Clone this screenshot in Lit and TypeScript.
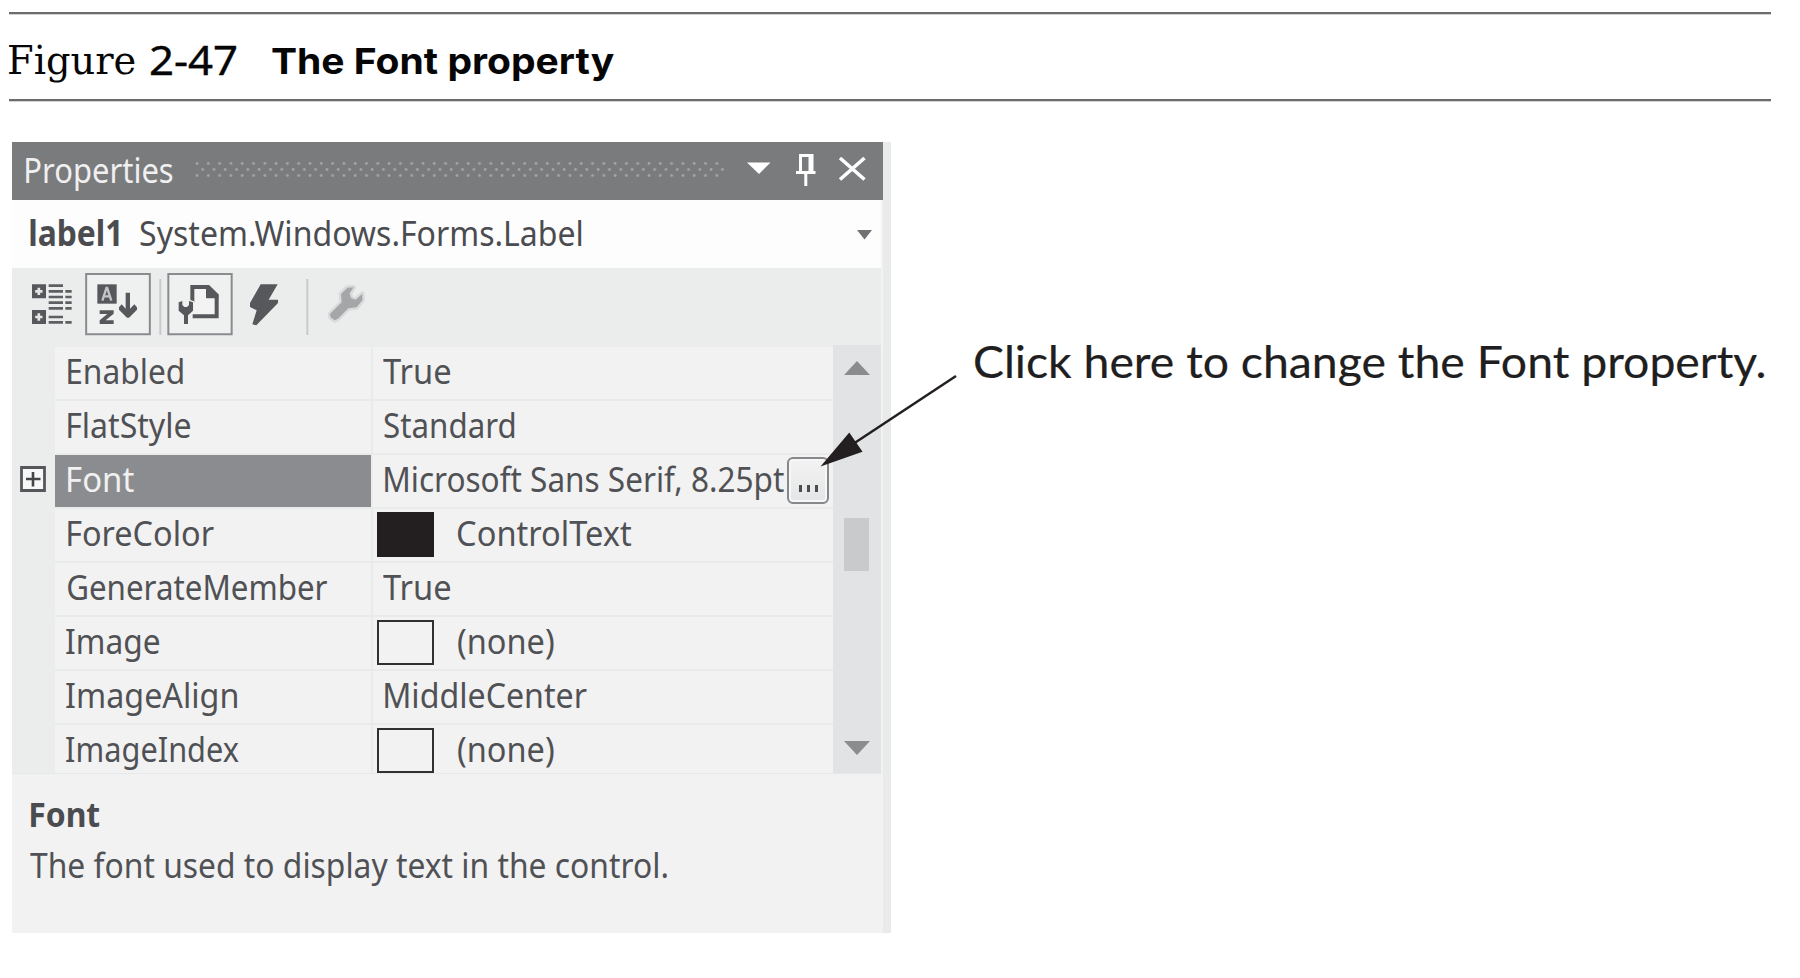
import { LitElement, html, css, svg, nothing } from "lit";
import { customElement, property } from "lit/decorators.js";
import { styleMap } from "lit/directives/style-map.js";

const UI = '"Noto Sans", "Open Sans", sans-serif';
const canvas = document.createElement("canvas");

/** A single line of text whose visible width is stretched to a given size. */
@customElement("fit-text")
class FitText extends LitElement {
  @property() text = "";
  @property({ type: Number }) w = 100;
  @property() font = "400 34px " + UI;

  static styles = css`
    :host { display: block; flex: none; white-space: pre; }
    .box { display: block; }
    .ink { display: inline-block; transform-origin: 0 50%; }
  `;

  render() {
    const ctx = canvas.getContext("2d")!;
    ctx.font = this.font;
    const m = ctx.measureText(this.text);
    const left = m.actualBoundingBoxLeft;
    const k = this.w / (left + m.actualBoundingBoxRight);
    return html`<span class="box" style=${styleMap({ width: this.w + "px" })}
      ><span class="ink" style=${styleMap({ transform: `translateX(${left * k}px) scaleX(${k})` })}>${this.text}</span></span>`;
  }
}

type Row = { name: string; nx: number; nw: number; value: string; vw: number; vx: number; swatch?: "dark" | "empty"; selected?: boolean };

const rows: Row[] = [
  { name: "Enabled", nx: 13, nw: 115.5, value: "True", vx: 10, vw: 67.5 },
  { name: "FlatStyle", nx: 13, nw: 122.5, value: "Standard", vx: 10.5, vw: 131 },
  { name: "Font", nx: 13, nw: 66, value: "Microsoft Sans Serif, 8.25pt", vx: 11.5, vw: 399, selected: true },
  { name: "ForeColor", nx: 13, nw: 146, value: "ControlText", vx: 24, vw: 173.5, swatch: "dark" },
  { name: "GenerateMember", nx: 12.5, nw: 259.5, value: "True", vx: 10, vw: 67.5 },
  { name: "Image", nx: 10.5, nw: 93.5, value: "(none)", vx: 23.5, vw: 95.5, swatch: "empty" },
  { name: "ImageAlign", nx: 10.5, nw: 171.5, value: "MiddleCenter", vx: 11.5, vw: 202 },
  { name: "ImageIndex", nx: 10.5, nw: 173, value: "(none)", vx: 23.5, vw: 95.5, swatch: "empty" },
];

@customElement("app-root")
class AppRoot extends LitElement {
  static styles = css`
    :host { display: block; position: relative; width: 1800px; height: 978px; overflow: hidden; background: #fff;
      font-family: "Noto Sans", "Open Sans", sans-serif; font-size: 34px; color: #505155; }
    * { box-sizing: border-box; }
    svg { display: block; flex: none; }
    .caption { margin: 12px 0 0 9px; width: 1762px; height: 89px; display: flex; align-items: flex-start;
      border-top: 2px solid #6c6c6c; border-bottom: 2px solid #6c6c6c; color: #060606; box-shadow: 0 1px 0 #d2d2d2, inset 0 1px 0 #d2d2d2; }
    .fig { font: 400 39.5px/92px "DejaVu Serif", "Noto Serif", serif; }
    .num { font: 400 40px/92px "Noto Sans", sans-serif; margin-left: 15px; -webkit-text-stroke: 0.4px #060606; }
    .title { font: 700 36px/95px Inter, sans-serif; margin-left: 36px; }
    .body { display: flex; align-items: flex-start; padding: 41px 0 0 12px; }
    .panel { width: 879px; height: 791px; background: #f2f2f2; border-right: 8px solid #e9ebeb; display: flex; flex-direction: column; }
    .head { height: 58px; background: #7a7b7d; display: flex; align-items: flex-start; color: #f0f0f1; font-size: 35px; line-height: 48px; padding: 4px 0 0 14px; flex: none; }
    .dots { margin: 15px 0 0 22px; }
    .hbtns { margin: 4px 0 0 15px; }
    .combo { height: 68px; margin-right: 2px; padding: 4px 9px 0 18px; background: #fdfdfd; display: flex; line-height: 58px; font-size: 35px; color: #4b4c50; flex: none; }
    .obj { font-weight: 700; margin-right: 21px; }
    .chev { margin: 26px 0 0 auto; }
    .tools { height: 77px; background: #ebeded; display: flex; padding-left: 20px; flex: none; margin-right: 2px; }
    .grid { display: flex; flex: none; height: 429px; background: #ebeded; margin-right: 2px; border-bottom: 1px solid #e6e9e9; }
    .gutter { width: 43px; padding: 121px 0 0 8px; }
    .cells { width: 778px; background: #f2f2f2; margin-top: 2px; overflow: hidden; }
    .row { display: flex; height: 54px; line-height: 49px; border-bottom: 2px solid #e9ebeb; }
    .name { width: 318px; border-right: 2px solid #e9ebeb; }
    .row.sel .name { background: #8b8c8f; color: #f1f1f2; border-right-color: #ebeded; }
    .value { flex: 1; display: flex; align-items: flex-start; }
    .lead { height: 1px; flex: none; }
    .swatch { width: 57px; height: 45px; margin: 3px 0 0 4px; border: 2.5px solid #303031; flex: none; }
    .swatch.dark { background: #231f20; border-color: #231f20; }
    .more { width: 42px; height: 47px; margin: 2px 0 0 3.5px; border: 2px solid #87888b; border-radius: 6px; background: linear-gradient(#f3f3f3, #e4e5e6); box-shadow: inset 0 0 0 2px #f7f7f7; display: flex; justify-content: center; gap: 5px; padding-top: 26px; flex: none; }
    .more i { width: 3px; height: 7px; background: #4c4d50; }
    .scroll { width: 48px; background: #e1e3e5; padding: 16px 0 0 10.5px; }
    .thumb { width: 25px; height: 53px; margin: 143px 0 170px 0; background: #c9cacc; }
    .desc { padding: 16px 0 0 18px; }
    .desc .dt { margin-left: 1px; font-weight: 700; line-height: 48px; color: #4b4c50; }
    .desc .dd { line-height: 54px; }
    .note { margin: 189px 0 0 84px; font: 400 44.5px/60px Lato, sans-serif; color: #1f1e20; -webkit-text-stroke: 0.2px #1f1e20; }
    .arrow { position: absolute; left: 810px; top: 365px; pointer-events: none; }
  `;

  private toolbar() {
    return svg`<svg width="340" height="77" viewBox="96 414 1020 231" fill="#57585b">
      <path d="M95 463h43v42h-43zM95 540h43v42h-43z"/>
      <path d="M116.500 473v22M105.500 484h22M116.500 550v22M105.500 561h22" stroke="#e6e6e6" stroke-width="8"/>
      <path d="M146 467h43M146 484h43M146 501h43M146 518h43M146 535h43M146 561h43M146 577h43M196 484h19M196 501h19M196 518h19M196 535h19M196 577h19" stroke="#5e5f62" stroke-width="8"/>
      <path d="M258.500 432h191v181h-191zM505 432h190v181h-190z" fill="#eff0f0" stroke="#8a8b8e" stroke-width="6"/>
      <path d="M292 463h58v58h-58z"/>
      <path d="M307 512l12.500-38h2l12.500 38M312 499h17" fill="none" stroke="#c4c5c7" stroke-width="7"/>
      <path d="M299 541h42v10l-24 20h24v11h-42v-11l23-19h-23z"/>
      <path d="M377 488h13v48l13-13 8 9v7l-24 24h-6l-24-24v-7l8-9 12 13z"/>
      <path d="M478 447h6v168h-6zM919 447h6v168h-6z" fill="#c9cacc"/>
      <path d="M577 518v-47h46l27 26v62h-72" fill="#f3f3f3" stroke="#57585b" stroke-width="12"/>
      <path d="M618 466h10l27 27v12h-37z"/>
      <path d="M537 518l9-4v12l6 6h10l6-6v-12l11 4v23l-15 14h-1v27h-11v-27h-1l-14-14z" fill="#eff0f0" stroke="#eff0f0" stroke-width="10"/>
      <path d="M536 517l11-4v12l6 6h8l6-6v-12l12 4v25l-15 14v26h-12v-26l-16-14z"/>
      <path d="M782 463h51l-27 46h28v10l-65 67-12-3 13-42-20-10v-12z"/>
      <path d="M992 550l33-33-2-25 19-19 19-1-12 18 4 14 14 5 20-18 0 20-17 21-25 3-31 31-10 5-12-9-2-8z" fill="#a5a6a8" stroke="#d9dadb" stroke-width="14" paint-order="stroke" stroke-linejoin="round"/>
    </svg>`;
  }

  private row(r: Row) {
    return html`<div class="row ${r.selected ? "sel" : ""}">
      <div class="name"><div style=${styleMap({ "padding-left": r.nx + "px" })}><fit-text .text=${r.name} .w=${r.nw}></fit-text></div></div>
      <div class="value">
        ${r.swatch ? html`<span class="swatch ${r.swatch}"></span>` : nothing}
        <span class="lead" style=${styleMap({ width: r.vx + "px" })}></span>
        <fit-text .text=${r.value} .w=${r.vw}></fit-text>
        ${r.selected ? html`<span class="more"><i></i><i></i><i></i></span>` : nothing}
      </div>
    </div>`;
  }

  render() {
    return html`
      <div class="caption">
        <fit-text class="fig" .font=${'400 39.5px "DejaVu Serif", "Noto Serif", serif'} .text=${"Figure"} .w=${126}></fit-text>
        <fit-text class="num" .font=${'400 40px "Noto Sans"'} .text=${"2-47"} .w=${86}></fit-text>
        <fit-text class="title" .font=${"700 36px Inter"} .text=${"The Font property"} .w=${342.5}></fit-text>
      </div>
      <div class="body">
        <div class="panel">
          <div class="head">
            <fit-text .font=${"400 35px " + UI} .text=${"Properties"} .w=${147}></fit-text>
            <svg class="dots" width="530" height="18" viewBox="0 0 530 18">
              <defs><pattern id="d" width="11.3" height="18" patternUnits="userSpaceOnUse">
                <g fill="#a3a4a6"><circle cx="2" cy="2.500" r="1.400"/><circle cx="7.650" cy="8.500" r="1.400"/><circle cx="2" cy="14.500" r="1.400"/></g>
              </pattern></defs>
              <rect width="530" height="18" fill="url(#d)"/>
            </svg>
            <svg class="hbtns" width="130" height="40" viewBox="740 150 130 40">
              <path d="M747 162.500h23.500L759 174z" fill="#fff"/>
              <path d="M800.500 172v-16.500h11.500V172M796 172.500h19.500M805.800 173v13" fill="none" stroke="#fff" stroke-width="3"/>
              <path d="M808.500 155h4.500v17h-4.500z" fill="#fff"/>
              <path d="M840 158l24.500 21.500M864.500 158L840 179.500" stroke="#fff" stroke-width="3.600"/>
            </svg>
          </div>
          <div class="combo">
            <fit-text class="obj" .font=${"700 35px " + UI} .text=${"label1"} .w=${89}></fit-text>
            <fit-text .font=${"400 35px " + UI} .text=${"System.Windows.Forms.Label"} .w=${442}></fit-text>
            <svg class="chev" width="15" height="10"><path d="M0 0h15L7.500 9.500z" fill="#707174"/></svg>
          </div>
          <div class="tools">${this.toolbar()}</div>
          <div class="grid">
            <div class="gutter">
              <svg width="26" height="26"><path d="M1.500 1.500h23v23h-23z" fill="#f7f7f7" stroke="#56575a" stroke-width="2.800"/><path d="M13 6v14.500M6 13h14.500" stroke="#444548" stroke-width="2.600"/></svg>
            </div>
            <div class="cells">${rows.map((r) => this.row(r))}</div>
            <div class="scroll">
              <svg width="26" height="14"><path d="M0 14h26L13 0z" fill="#8b8c8e"/></svg>
              <div class="thumb"></div>
              <svg width="26" height="14"><path d="M0 0h26L13 14z" fill="#8b8c8e"/></svg>
            </div>
          </div>
          <div class="desc">
            <fit-text class="dt" .font=${"700 34px " + UI} .text=${"Font"} .w=${68.5}></fit-text>
            <fit-text class="dd" .text=${"The font used to display text in the control."} .w=${637}></fit-text>
          </div>
        </div>
        <fit-text class="note" .font=${"400 44.5px Lato"} .text=${"Click here to change the Font property."} .w=${790}></fit-text>
      </div>
      <svg class="arrow" width="150" height="110" viewBox="810 365 150 110">
        <path d="M956 376L850 446" stroke="#231f20" stroke-width="2.500"/>
        <path d="M820.500 466.500L849.300 432.500L862.500 451.700z" fill="#231f20"/>
      </svg>
    `;
  }
}
